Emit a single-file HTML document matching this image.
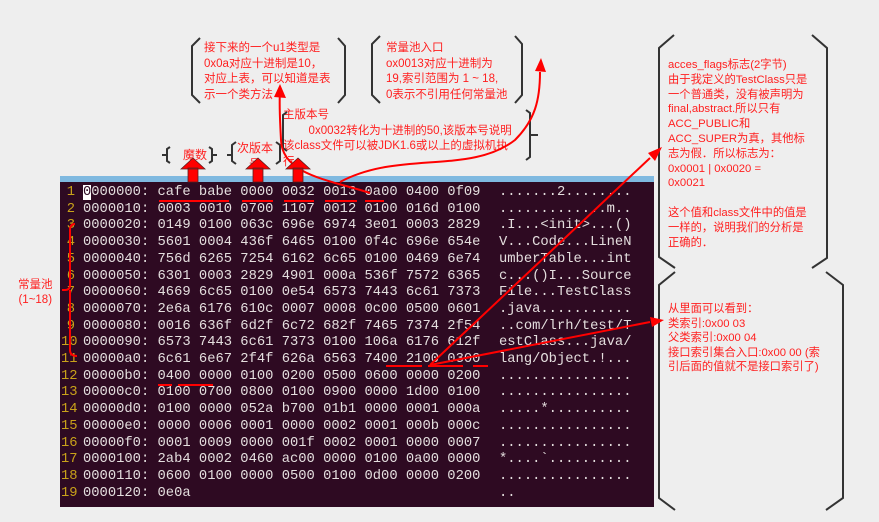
<!DOCTYPE html>
<html><head><meta charset="utf-8"><style>
body{margin:0;width:879px;height:522px;background:#eeeeee;position:relative;overflow:hidden;font-family:"Liberation Sans","Noto Sans CJK SC",sans-serif}
#term{position:absolute;left:60px;top:177px;width:594px;height:330px;background:#2e0a22}
#bar{position:absolute;left:60px;top:176px;width:594px;height:6px;background:#7fb9e0}
.row{position:absolute;left:0;height:17px;font:13.8px/17px "Liberation Mono","DejaVu Sans Mono",monospace;color:#e4dede;white-space:pre}
.ln{position:absolute;left:1px;width:14px;text-align:right;color:#c9a21a;font:13.8px/17px "Liberation Mono",monospace}
.a{position:absolute;left:23px}
.s{position:absolute;left:439px}
.t{position:absolute;color:#ff2020;font-size:11.5px;line-height:15.5px;white-space:pre}
</style></head><body>
<div id="term"></div><div id="bar"></div>
<div style="position:absolute;left:60px;top:184px;width:594px">
<div class="row" style="top:0"><span class="ln">1</span><span class="a"><span style="background:#fff;color:#2e0a22">0</span>000000: cafe babe 0000 0032 0013 0a00 0400 0f09</span><span class="s">.......2........</span></div>
<div class="row" style="top:16.7px"><span class="ln">2</span><span class="a">0000010: 0003 0010 0700 1107 0012 0100 016d 0100</span><span class="s">.............m..</span></div>
<div class="row" style="top:33.4px"><span class="ln">3</span><span class="a">0000020: 0149 0100 063c 696e 6974 3e01 0003 2829</span><span class="s">.I...&lt;init&gt;...()</span></div>
<div class="row" style="top:50.1px"><span class="ln">4</span><span class="a">0000030: 5601 0004 436f 6465 0100 0f4c 696e 654e</span><span class="s">V...Code...LineN</span></div>
<div class="row" style="top:66.8px"><span class="ln">5</span><span class="a">0000040: 756d 6265 7254 6162 6c65 0100 0469 6e74</span><span class="s">umberTable...int</span></div>
<div class="row" style="top:83.5px"><span class="ln">6</span><span class="a">0000050: 6301 0003 2829 4901 000a 536f 7572 6365</span><span class="s">c...()I...Source</span></div>
<div class="row" style="top:100.2px"><span class="ln">7</span><span class="a">0000060: 4669 6c65 0100 0e54 6573 7443 6c61 7373</span><span class="s">File...TestClass</span></div>
<div class="row" style="top:116.9px"><span class="ln">8</span><span class="a">0000070: 2e6a 6176 610c 0007 0008 0c00 0500 0601</span><span class="s">.java...........</span></div>
<div class="row" style="top:133.6px"><span class="ln">9</span><span class="a">0000080: 0016 636f 6d2f 6c72 682f 7465 7374 2f54</span><span class="s">..com/lrh/test/T</span></div>
<div class="row" style="top:150.3px"><span class="ln">10</span><span class="a">0000090: 6573 7443 6c61 7373 0100 106a 6176 612f</span><span class="s">estClass...java/</span></div>
<div class="row" style="top:167px"><span class="ln">11</span><span class="a">00000a0: 6c61 6e67 2f4f 626a 6563 7400 2100 0300</span><span class="s">lang/Object.!...</span></div>
<div class="row" style="top:183.7px"><span class="ln">12</span><span class="a">00000b0: 0400 0000 0100 0200 0500 0600 0000 0200</span><span class="s">................</span></div>
<div class="row" style="top:200.4px"><span class="ln">13</span><span class="a">00000c0: 0100 0700 0800 0100 0900 0000 1d00 0100</span><span class="s">................</span></div>
<div class="row" style="top:217.1px"><span class="ln">14</span><span class="a">00000d0: 0100 0000 052a b700 01b1 0000 0001 000a</span><span class="s">.....*..........</span></div>
<div class="row" style="top:233.8px"><span class="ln">15</span><span class="a">00000e0: 0000 0006 0001 0000 0002 0001 000b 000c</span><span class="s">................</span></div>
<div class="row" style="top:250.5px"><span class="ln">16</span><span class="a">00000f0: 0001 0009 0000 001f 0002 0001 0000 0007</span><span class="s">................</span></div>
<div class="row" style="top:267.2px"><span class="ln">17</span><span class="a">0000100: 2ab4 0002 0460 ac00 0000 0100 0a00 0000</span><span class="s">*....`..........</span></div>
<div class="row" style="top:283.9px"><span class="ln">18</span><span class="a">0000110: 0600 0100 0000 0500 0100 0d00 0000 0200</span><span class="s">................</span></div>
<div class="row" style="top:300.6px"><span class="ln">19</span><span class="a">0000120: 0e0a</span><span class="s">..</span></div>
</div>

<div class="t" style="left:204px;top:41px">接下来的一个u1类型是
0x0a对应十进制是10，
对应上表，可以知道是表
示一个类方法</div>
<div class="t" style="left:386px;top:41px">常量池入口
ox0013对应十进制为
19,索引范围为 1 ~ 18,
0表示不引用任何常量池</div>
<div class="t" style="left:283px;top:108px">主版本号
        0x0032转化为十进制的50,该版本号说明
该class文件可以被JDK1.6或以上的虚拟机执
行</div>
<div class="t" style="left:183px;top:148px;font-size:12px">魔数</div>
<div class="t" style="left:237px;top:140px;text-align:center;font-size:12px;line-height:16px">次版本
号</div>
<div class="t" style="left:668px;top:58px;font-size:11.3px;line-height:14.8px">acces_flags标志(2字节)
由于我定义的TestClass只是
一个普通类，没有被声明为
final,abstract.所以只有
ACC_PUBLIC和
ACC_SUPER为真，其他标
志为假．所以标志为：
0x0001 | 0x0020 =
0x0021

这个值和class文件中的值是
一样的，说明我们的分析是
正确的．</div>
<div class="t" style="left:668px;top:302px;font-size:11.3px;line-height:14.5px">从里面可以看到：
类索引:0x00 03
父类索引:0x00 04
接口索引集合入口:0x00 00 (索
引后面的值就不是接口索引了)</div>
<div class="t" style="left:18px;top:278px;text-align:center;line-height:15px">常量池
(1~18)</div>

<svg width="879" height="522" style="position:absolute;left:0;top:0" fill="none">
<g stroke="#333" stroke-width="2">
<path d="M200 38 L192 46 L192 95 L200 103"/><path d="M338 38 L345 46 L345 95 L338 103"/>
<path d="M380 36 L372 44 L372 95 L380 103"/><path d="M515 36 L522 44 L522 95 L515 103"/>
<path d="M287 112 L283 115 L283 148 L287 151"/><path d="M526 110 L530 113 L530 157 L526 160"/>
<path d="M530 135 L538 135"/>
<path d="M170 147 L167 149 L167 161 L170 163 M162 155 L167 155"/>
<path d="M209 147 L212 149 L212 161 L209 163 M212 155 L217 155"/>
<path d="M236 142 L232 145 L232 161 L236 164 M227 155 L232 155"/>
<path d="M276 142 L280 145 L280 161 L276 164"/>
<path d="M674 35 L659 48 L659 257 L675 268"/><path d="M812 35 L827 48 L827 258 L812 268"/>
<path d="M675 272 L659 285 L659 498 L675 510"/><path d="M826 272 L843 285 L843 498 L826 510"/>
</g>
<g stroke="#f00" stroke-width="2">
<path d="M159 201 L229 201 M242 201 L273 201 M284 201 L314 201 M325 201 L357 201 M365 201 L384 201"/>
<path d="M386 366 L422 366 M428 366 L463 366 M473 366 L488 366"/>
<path d="M158 385 L172 385 M178 385 L213 385"/>
<path d="M75 224 Q70 224 70 230 L70 285 Q70 290 65 290 L62 290 M70 290 L70 350 Q70 356 77 356"/>
<path d="M370 193 C330 180 282 175 281 140 C280 120 279 105 280 92"/>
<path d="M340 182 C400 150 470 175 515 140 C535 120 540 100 540 72"/>
<path d="M430 365 L650 158"/>
<path d="M430 365 L650 322"/>
</g>
<g fill="#f00" stroke="#5a2020" stroke-width="0.8">
<path d="M188 168 L198 168 L198 182 L188 182 Z M181 169 L193 158 L205 169 Z"/>
<path d="M253 168 L263 168 L263 182 L253 182 Z M246 169 L258 158 L270 169 Z"/>
<path d="M293 168 L303 168 L303 182 L293 182 Z M286 169 L298 158 L310 169 Z"/>
</g>
<g fill="#f00">
<path d="M280 84 L286 98 L274 97 Z"/>
<path d="M541 58 L546 72 L535 71 Z"/>
<path d="M662 147 L648 153 L655 161 Z"/>
<path d="M664 320 L650 317 L652 327 Z"/>
</g>
</svg>
</body></html>
